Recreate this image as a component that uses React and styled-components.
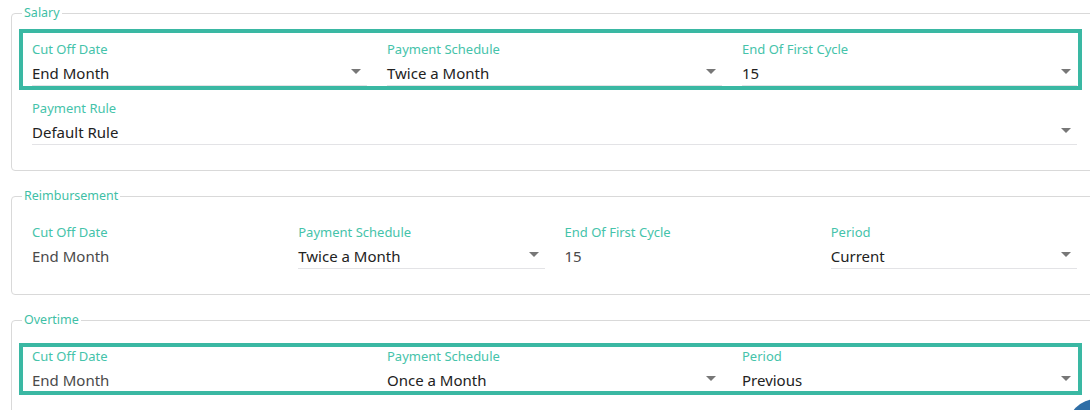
import React from "react";
import styled, { createGlobalStyle, css } from "styled-components";

const Global = createGlobalStyle`
  html, body { margin: 0; padding: 0; background: #fff; overflow: hidden; }
  body { font-family: "Noto Sans", "Open Sans", sans-serif; width: 1090px; height: 410px; }
`;

const Page = styled.div`
  position: relative;
  width: 1090px;
  height: 410px;
  overflow: hidden;
  padding: 4px 0 0 11px;
  box-sizing: border-box;
  display: flex;
  flex-direction: column;
  gap: 16px;
`;

const Group = styled.fieldset`
  margin: 0;
  width: 1087px;
  min-width: 1087px;
  box-sizing: border-box;
  padding: 18px 20px 25px;
  border: 1px solid #d9d9d9;
  border-radius: 4px;
  display: flex;
  flex-direction: column;
  gap: 13px;
`;

const Legend = styled.legend`
  margin-left: -10px;
  padding: 0 2px;
  font-size: 12.5px;
  line-height: 18px;
  color: #3fbfa6;
`;

const Row = styled.div`
  position: relative;
  display: grid;
  grid-template-columns: repeat(${(p) => p.$cols}, 1fr);
  column-gap: 20px;
  ${(p) =>
    p.$hl &&
    css`
      &::after {
        content: "";
        position: absolute;
        left: -13px;
        right: -5px;
        top: ${p.$hl[0]}px;
        bottom: ${p.$hl[1]}px;
        border: 4px solid #3ab8a3;
        pointer-events: none;
      }
    `}
`;

const Field = styled.div`
  display: flex;
  flex-direction: column;
  gap: 3px;
  min-width: 0;
`;

const Label = styled.div`
  font-size: 13px;
  line-height: 18px;
  color: #45c3aa;
`;

const Value = styled.div`
  height: 24px;
  display: flex;
  align-items: center;
  justify-content: space-between;
  font-size: 15px;
  color: ${(p) => (p.$plain ? "#4a4a4a" : "#222")};
  border-bottom: 1px solid ${(p) => (p.$plain ? "transparent" : "#e3e3e6")};
`;

const Caret = styled.span`
  width: 0;
  height: 0;
  border-left: 5px solid transparent;
  border-right: 5px solid transparent;
  border-top: 5px solid #777;
  margin: 0 6px 3px 0;
`;

const Fab = styled.div`
  position: absolute;
  left: 1068px;
  top: 399px;
  width: 56px;
  height: 56px;
  border-radius: 50%;
  background: #2f6ea6;
`;

const F = ({ label, value, plain }) => (
  <Field>
    <Label>{label}</Label>
    <Value $plain={plain}>
      <span>{value}</span>
      {!plain && <Caret />}
    </Value>
  </Field>
);

export default function App() {
  return (
    <>
      <Global />
      <Page>
        <Group>
          <Legend>Salary</Legend>
          <Row $cols={3} $hl={[-11, -4]}>
            <F label="Cut Off Date" value="End Month" />
            <F label="Payment Schedule" value="Twice a Month" />
            <F label="End Of First Cycle" value="15" />
          </Row>
          <Row $cols={1}>
            <F label="Payment Rule" value="Default Rule" />
          </Row>
        </Group>
        <Group>
          <Legend>Reimbursement</Legend>
          <Row $cols={4}>
            <F label="Cut Off Date" value="End Month" plain />
            <F label="Payment Schedule" value="Twice a Month" />
            <F label="End Of First Cycle" value="15" plain />
            <F label="Period" value="Current" />
          </Row>
        </Group>
        <Group>
          <Legend>Overtime</Legend>
          <Row $cols={3} $hl={[-4, -2]}>
            <F label="Cut Off Date" value="End Month" plain />
            <F label="Payment Schedule" value="Once a Month" />
            <F label="Period" value="Previous" />
          </Row>
        </Group>
        <Fab />
      </Page>
    </>
  );
}
